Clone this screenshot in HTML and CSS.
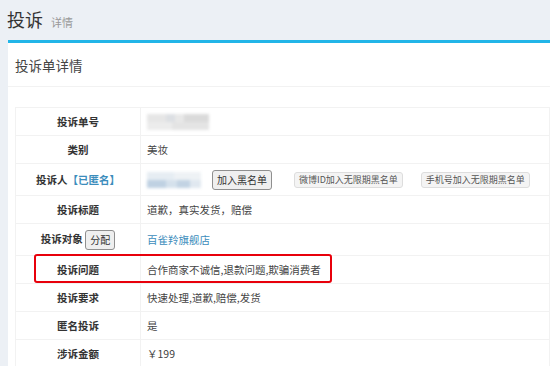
FILE: index.html
```html
<!DOCTYPE html>
<html lang="zh-CN">
<head>
    <meta charset="UTF-8">
    <title>投诉详情</title>
    <link rel="stylesheet" href="styles.css">
</head>
<body>
    <section class="content-header">
        <h1>投诉<small>详情</small></h1>
    </section>
    <section class="content">
        <div class="box">
            <div class="box-header">
                <h3 class="box-title">投诉单详情</h3>
            </div>
            <div class="box-body">
                <table class="detail-table">
                    <tr>
                        <th>投诉单号</th>
                        <td><span class="masked masked-order"><i></i><i></i></span></td>
                    </tr>
                    <tr>
                        <th>类别</th>
                        <td>美妆</td>
                    </tr>
                    <tr class="tall">
                        <th>投诉人<span class="tag">【已匿名】</span></th>
                        <td>
                            <div class="user-row">
                                <span class="masked masked-user"><i></i><i></i></span>
                                <button class="btn">加入黑名单</button>
                                <button class="btn btn-sm btn-weibo">微博ID加入无限期黑名单</button>
                                <button class="btn btn-sm btn-phone">手机号加入无限期黑名单</button>
                            </div>
                        </td>
                    </tr>
                    <tr>
                        <th>投诉标题</th>
                        <td>道歉，真实发货，赔偿</td>
                    </tr>
                    <tr class="tall">
                        <th>投诉对象 <button class="btn">分配</button></th>
                        <td><a href="#" class="link">百雀羚旗舰店</a></td>
                    </tr>
                    <tr>
                        <th>投诉问题</th>
                        <td>合作商家不诚信,退款问题,欺骗消费者</td>
                    </tr>
                    <tr>
                        <th>投诉要求</th>
                        <td>快速处理,道歉,赔偿,发货</td>
                    </tr>
                    <tr>
                        <th>匿名投诉</th>
                        <td>是</td>
                    </tr>
                    <tr>
                        <th>涉诉金额</th>
                        <td>￥199</td>
                    </tr>
                </table>
                <div class="highlight"></div>
            </div>
        </div>
    </section>
</body>
</html>
```

FILE: styles.css
```css
* { margin: 0; padding: 0; box-sizing: border-box; }

body {
    font-family: "Noto Sans CJK SC", "Liberation Sans", sans-serif;
    background: #ecf0f5;
    color: #333333;
    font-size: 11px;
    overflow: hidden;
}

.content-header {
    padding: 6px 7px 0;
    height: 40px;
}

.content-header h1 {
    font-size: 18px;
    font-weight: 400;
    line-height: 26px;
    color: #333333;
}

.content-header small {
    font-size: 11px;
    color: #999999;
    margin-left: 8px;
}

.content {
    padding-left: 8px;
}

.box {
    background: #ffffff;
    border-top: 3px solid #22b5e8;
    width: 542px;
    min-height: 330px;
}

.box-header {
    height: 44px;
    border-bottom: 1px solid #f2f2f2;
    padding: 0 7px;
    display: flex;
    align-items: center;
}

.box-title {
    font-size: 13.5px;
    font-weight: 400;
    color: #444444;
}

.box-body {
    position: relative;
    padding: 20px 0 0 7px;
}

.detail-table {
    border-collapse: collapse;
    width: 100%;
    border: 1px solid #f2f2f2;
}

.detail-table th,
.detail-table td {
    border: 1px solid #f2f2f2;
    padding: 0 6px;
    line-height: 16px;
    height: 28px;
    font-size: 10.5px;
    vertical-align: middle;
}

.detail-table .tall th,
.detail-table .tall td {
    height: 32px;
}

.detail-table th {
    width: 125px;
    text-align: center;
    font-weight: 700;
    color: #333333;
    white-space: nowrap;
}

.detail-table td {
    color: #444444;
    white-space: nowrap;
}

.tag {
    color: #3c8dbc;
}

.link {
    color: #3c8dbc;
    text-decoration: none;
}

.btn {
    font-family: inherit;
    font-size: 10px;
    font-weight: 400;
    line-height: 16px;
    padding: 0 4px;
    color: #333333;
    background: #efefef;
    border: 1px solid #8f8f8f;
    border-radius: 3px;
    height: 20px;
    vertical-align: middle;
}

.btn-sm {
    font-size: 9px;
    line-height: 14px;
    height: 16px;
    padding: 0 4px;
    color: #555555;
    background: #f4f4f4;
    border-color: #dddddd;
}

.user-row {
    display: flex;
    align-items: center;
}

.user-row .btn {
    margin-left: 11px;
}

.user-row .btn-weibo {
    margin-left: 22px;
}

.user-row .btn-phone {
    margin-left: 18px;
}

.masked {
    display: inline-flex;
    flex-direction: column;
    vertical-align: middle;
    filter: blur(1.5px);
}

.masked i {
    display: block;
    height: 8px;
}

.masked-order {
    width: 62px;
}

.masked-order i {
    background: linear-gradient(90deg, #e6e6e6 0 30%, #dcdfe3 30% 45%, #e8e8e8 45% 60%, #dadada 60% 100%);
}

.masked-order i + i {
    background: linear-gradient(90deg, #ececec 0 40%, #e4e4e4 40% 100%);
}

.masked-user {
    width: 54px;
}

.masked-user i {
    background: linear-gradient(90deg, #e6edf3 0 50%, #eef2f5 50% 100%);
}

.masked-user i + i {
    background: linear-gradient(90deg, #bfd1e2 0 35%, #d5e1ec 35% 55%, #c2d3e3 55% 80%, #e0e8f0 80% 100%);
}

.highlight {
    position: absolute;
    left: 26px;
    top: 167px;
    width: 298px;
    height: 29px;
    border: 2px solid #e8000b;
    border-radius: 3px;
}
```
